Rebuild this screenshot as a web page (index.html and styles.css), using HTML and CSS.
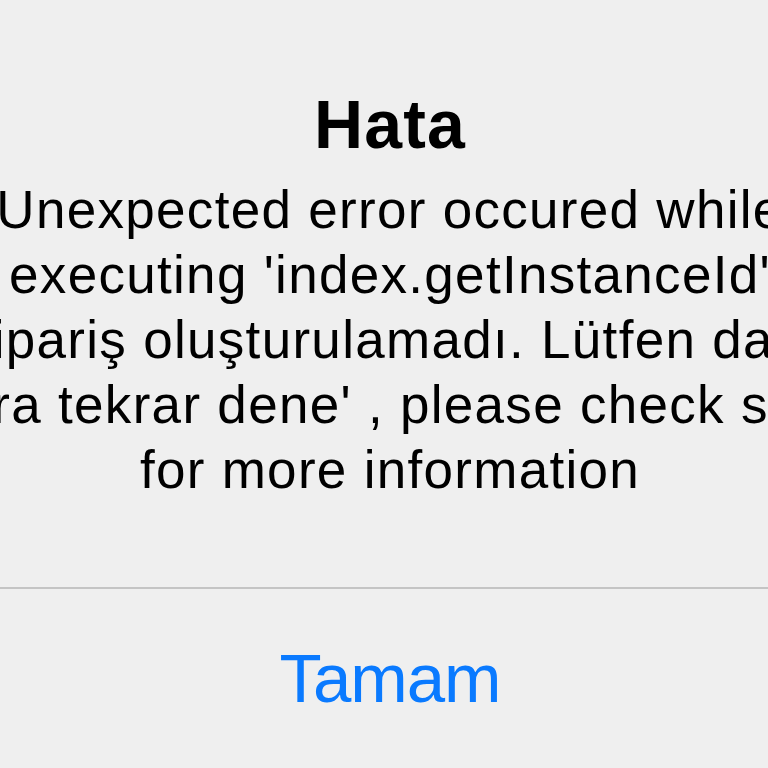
FILE: index.html
```html
<!DOCTYPE html>
<html lang="tr">
<head>
<meta charset="utf-8">
<title>Hata</title>
<link rel="stylesheet" href="styles.css">
</head>
<body>
<div class="alert">
  <div class="content">
    <h1 class="title">Hata</h1>
    <div class="message">
      <div class="line">Unexpected error occured while</div>
      <div class="line">executing 'index.getInstanceId'</div>
      <div class="line">'Sipariş oluşturulamadı. Lütfen daha</div>
      <div class="line">sonra tekrar dene' , please check serve<span class="tail">r logs</span></div>
      <div class="line">for more information</div>
    </div>
  </div>
  <div class="separator"></div>
  <div class="actions">
    <button class="action">Tamam</button>
  </div>
</div>
</body>
</html>
```
FILE: styles.css
```css
html, body {
  margin: 0;
  padding: 0;
  width: 768px;
  height: 768px;
  overflow: hidden;
  background: #efefef;
}
.alert {
  width: 768px;
  height: 768px;
  overflow: hidden;
  display: flex;
  flex-direction: column;
  font-family: "Liberation Sans", Arial, sans-serif;
  color: #000;
}
.content {
  display: flex;
  flex-direction: column;
  align-items: center;
  padding-top: 84px;
  padding-left: 12px;
}
.title {
  margin: 0;
  font-size: 68px;
  line-height: 80px;
  font-weight: 700;
  letter-spacing: 1.2px;
  white-space: nowrap;
}
.message {
  margin-top: 13px;
  display: flex;
  flex-direction: column;
  align-items: center;
  font-size: 53px;
  line-height: 65px;
  letter-spacing: 1.3px;
}
.line {
  white-space: nowrap;
}
.tail {
  display: inline-block;
  width: 0;
  white-space: nowrap;
}
.separator {
  margin-top: 85px;
  height: 2px;
  background: #c4c4c4;
}
.actions {
  display: flex;
  justify-content: center;
  padding-top: 50px;
  padding-left: 12px;
}
.action {
  border: 0;
  background: none;
  padding: 0;
  font-family: "Liberation Sans", Arial, sans-serif;
  font-size: 69px;
  line-height: 80px;
  letter-spacing: -1px;
  color: #0a7aff;
}
```
